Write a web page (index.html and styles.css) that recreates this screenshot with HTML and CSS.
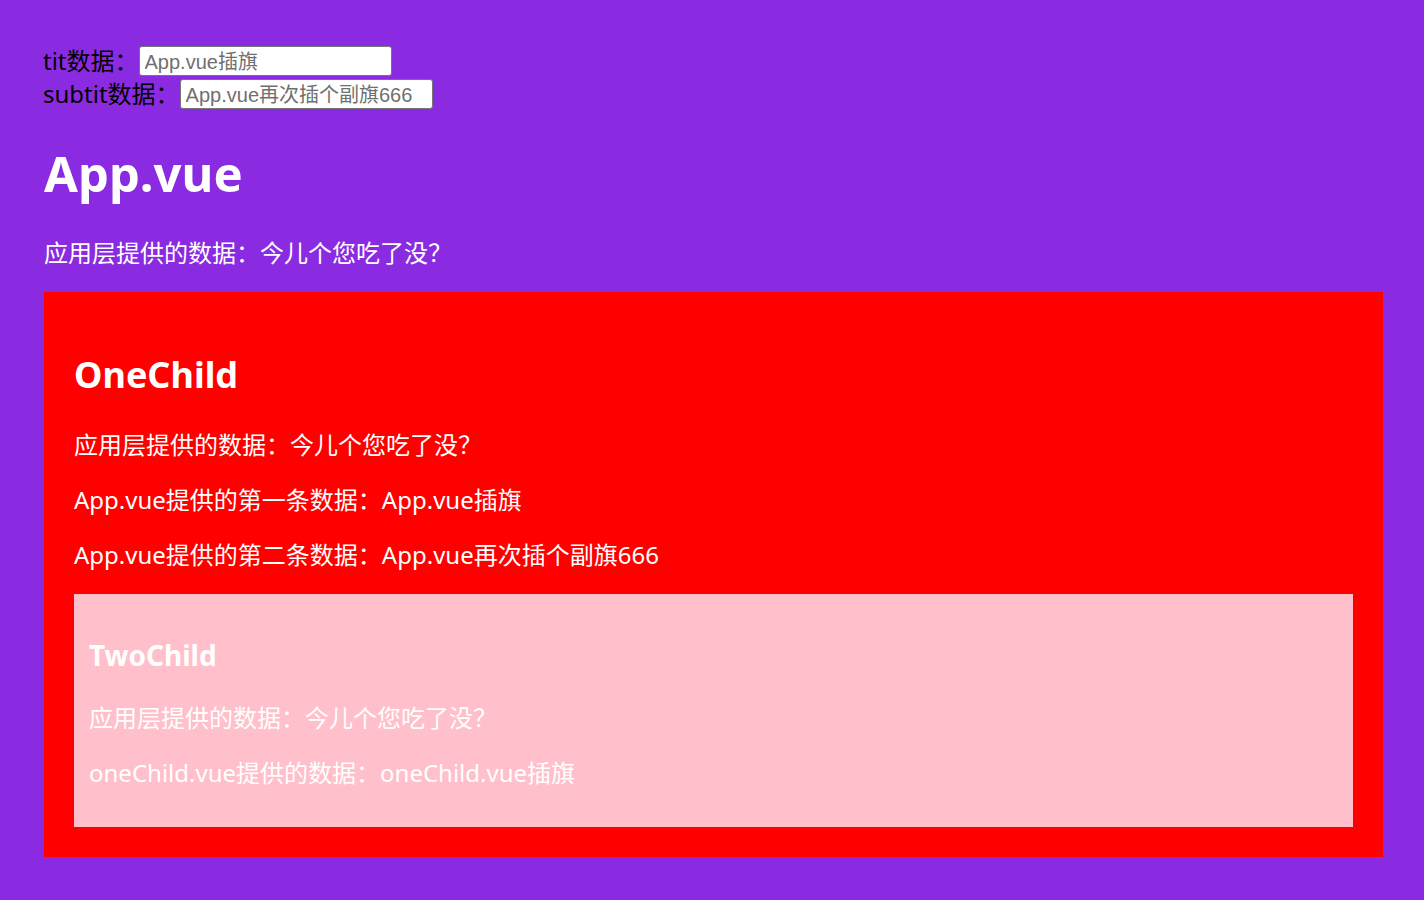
FILE: index.html
```html
<!DOCTYPE html>
<html lang="zh-CN">
<head>
<meta charset="utf-8">
<title>App.vue</title>
<link rel="stylesheet" href="styles.css">
</head>
<body>
<div class="app">
  <div class="field"><span class="label">tit数据：</span><input class="input" type="text" value="App.vue插旗"></div>
  <div class="field"><span class="label">subtit数据：</span><input class="input" type="text" value="App.vue再次插个副旗666"></div>
  <h1 class="title">App.vue</h1>
  <p class="text">应用层提供的数据：今儿个您吃了没？</p>
  <div class="one-child">
    <h2 class="sub-title">OneChild</h2>
    <p class="text">应用层提供的数据：今儿个您吃了没？</p>
    <p class="text">App.vue提供的第一条数据：App.vue插旗</p>
    <p class="text">App.vue提供的第二条数据：App.vue再次插个副旗666</p>
    <div class="two-child">
      <h3 class="small-title">TwoChild</h3>
      <p class="text">应用层提供的数据：今儿个您吃了没？</p>
      <p class="text">oneChild.vue提供的数据：oneChild.vue插旗</p>
    </div>
  </div>
</div>
</body>
</html>
```

FILE: styles.css
```css
html, body {
  margin: 0;
  padding: 0;
  background: #8a2be2;
}

body {
  font-family: "Noto Sans", "Noto Sans CJK SC", sans-serif;
  font-size: 24px;
  color: #ffffff;
}

.app {
  padding: 44px 41px 44px 44px;
}

.field {
  display: flex;
  align-items: center;
  height: 33px;
  color: #000000;
  line-height: 33px;
}

.label {
  white-space: nowrap;
  margin-left: -1px;
}

.input {
  box-sizing: border-box;
  width: 253px;
  height: 30px;
  margin-left: 0;
  padding: 0 5px;
  border: 1px solid #767676;
  border-radius: 3px;
  background: #ffffff;
  color: #6f6f6f;
  font-family: "Liberation Sans", "Noto Sans CJK SC", sans-serif;
  font-size: 20px;
  outline: none;
}

.title {
  margin: 32px 0;
  font-size: 49px;
  line-height: 63px;
  font-weight: 700;
}

.text {
  margin: 24px 0;
  line-height: 31px;
}

.one-child {
  background: #ff0000;
  padding: 30px;
}

.sub-title {
  margin: 30px 0;
  font-size: 36px;
  line-height: 46.5px;
  font-weight: 700;
}

.two-child {
  background: #ffc0cb;
  padding: 15px;
}

.small-title {
  margin: 28px 0;
  font-size: 28px;
  line-height: 37px;
  font-weight: 700;
}

.two-child .text:last-child {
  margin-bottom: 24px;
}
```
